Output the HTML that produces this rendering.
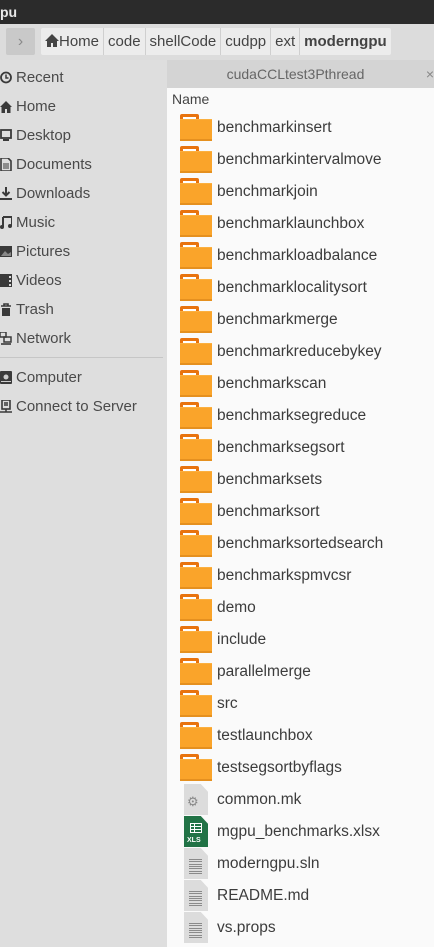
<!DOCTYPE html>
<html><head><meta charset="utf-8">
<style>
*{margin:0;padding:0;box-sizing:border-box}
body{width:434px;height:947px;overflow:hidden;background:#dedede;font-family:"Liberation Sans",sans-serif;position:relative}
#title{position:absolute;left:0;top:0;width:434px;height:24px;background:#2b2b2b;color:#e8e8e8;font-weight:bold;font-size:14px;line-height:24px;padding-left:0}
#tool{position:absolute;left:0;top:24px;width:434px;height:36px;background:#dcdcdc}
.navbtn{position:absolute;left:6px;top:4px;width:29px;height:27px;background:#c9c9c9;border-radius:2px;color:#8a8a8a;font-size:16px;text-align:center;line-height:27px}
.crumbs{position:absolute;left:41px;top:4px;height:27px;background:#ececec;border-radius:2px;display:flex;font-size:15px;color:#444;line-height:27px}
.crumbs span{padding:0 4px;border-right:1px solid #cfcfcf}
.crumbs span:last-child{border:none;font-weight:bold}
#side{position:absolute;left:0;top:60px;width:166px;height:887px;background:#dedede}
.si{position:absolute;left:16px;font-size:15px;color:#4a4a4a;line-height:18px}
.ic{position:absolute;left:0;width:12px;height:13px}
#sep{position:absolute;left:0;top:357px;width:163px;height:1px;background:#c6c6c6}
#main{position:absolute;left:167px;top:60px;width:267px;height:887px;background:#fafafa}
#tab{position:absolute;left:0;top:0;width:267px;height:28px;background:#d4d4d4;color:#666;font-size:14px;text-align:center;line-height:28px;padding-right:10px}
#tab b{position:absolute;right:0;top:0;font-weight:normal;color:#888}
#hdr{position:absolute;left:5px;top:31px;font-size:14px;color:#444}
.row{position:absolute;left:0;width:267px;height:32px}
.row .t{position:absolute;left:50px;top:8px;font-size:15.5px;color:#3c3c3c;white-space:nowrap}
.fold{position:absolute;left:13px;top:3px;width:32px;height:27px}
.fold .tb{position:absolute;left:0;top:0;width:19px;height:6px;background:#e8730e;border-radius:2px 2px 0 0}
.fold .wl{position:absolute;left:3px;top:3px;width:13px;height:2px;background:#fff}
.fold .bd{position:absolute;left:0;top:5px;width:32px;height:22px;background:#faa42a;border-top:1px solid #fbb040;border-bottom:2px solid #e5901f}
.doc{position:absolute;left:17px;top:1px;width:24px;height:31px;background:#dcdcdc;clip-path:polygon(0 0,70% 0,100% 25%,100% 100%,0 100%)}
.doc i{position:absolute;left:5px;width:13px;height:1px;background:#8a8a8a}
</style></head><body>
<div id="title">pu</div>
<div id="tool">
<div class="navbtn">›</div>
<div class="crumbs"><span><svg width="14" height="13" viewBox="0 0 14 13" style="vertical-align:-1px"><path d="M7 0L0 7h2v6h4V9h2v4h4V7h2z" fill="#444"/></svg>Home</span><span>code</span><span>shellCode</span><span>cudpp</span><span>ext</span><span>moderngpu</span></div>
</div>
<div id="side">
<svg class="ic" style="top:11px" viewBox="0 0 12 13"><circle cx="6" cy="6.5" r="5" fill="none" stroke="#3a3a3a" stroke-width="1.8"/><path d="M6 3.5v3.5h2.5" stroke="#3a3a3a" stroke-width="1.5" fill="none"/></svg><div class="si" style="top:9px">Recent</div>
<svg class="ic" style="top:40px" viewBox="0 0 12 13"><path d="M6 1L0 7h1.5v6h3.5V9h2v4h3.5V7H12z" fill="#3a3a3a"/></svg><div class="si" style="top:38px">Home</div>
<svg class="ic" style="top:69px" viewBox="0 0 12 13"><rect x="1" y="1" width="10" height="8" fill="none" stroke="#3a3a3a" stroke-width="1.8"/><rect x="3" y="10" width="6" height="2" fill="#3a3a3a"/></svg><div class="si" style="top:67px">Desktop</div>
<svg class="ic" style="top:98px" viewBox="0 0 12 13"><path d="M1 0h7l3 3v10H1z" fill="none" stroke="#3a3a3a" stroke-width="1.6"/><path d="M3 6h6M3 8h6M3 10h6" stroke="#3a3a3a"/></svg><div class="si" style="top:96px">Documents</div>
<svg class="ic" style="top:127px" viewBox="0 0 12 13"><path d="M6 0v8M2.5 5L6 8.5 9.5 5" stroke="#3a3a3a" stroke-width="2" fill="none"/><rect x="0" y="11" width="12" height="2" fill="#3a3a3a"/></svg><div class="si" style="top:125px">Downloads</div>
<svg class="ic" style="top:156px" viewBox="0 0 12 13"><path d="M3 1h9v9M3 1v10" stroke="#3a3a3a" stroke-width="2" fill="none"/><circle cx="2" cy="11" r="2" fill="#3a3a3a"/><circle cx="10" cy="10" r="2" fill="#3a3a3a"/></svg><div class="si" style="top:154px">Music</div>
<svg class="ic" style="top:185px" viewBox="0 0 12 13"><rect x="0" y="1" width="12" height="11" fill="#3a3a3a"/><path d="M1 11l4-5 3 3 3-2v4z" fill="#888"/></svg><div class="si" style="top:183px">Pictures</div>
<svg class="ic" style="top:214px" viewBox="0 0 12 13"><rect x="0" y="0" width="12" height="13" fill="#3a3a3a"/><rect x="9" y="2" width="2" height="2" fill="#ddd"/><rect x="9" y="6" width="2" height="2" fill="#ddd"/><rect x="9" y="10" width="2" height="2" fill="#ddd"/></svg><div class="si" style="top:212px">Videos</div>
<svg class="ic" style="top:243px" viewBox="0 0 12 13"><path d="M1 3h10M4 3V1h4v2" stroke="#3a3a3a" stroke-width="1.6" fill="none"/><rect x="2" y="5" width="8" height="8" fill="#3a3a3a"/></svg><div class="si" style="top:241px">Trash</div>
<svg class="ic" style="top:272px" viewBox="0 0 12 13"><rect x="0" y="0" width="6" height="5" fill="none" stroke="#3a3a3a" stroke-width="1.5"/><rect x="4" y="5" width="7" height="5" fill="none" stroke="#3a3a3a" stroke-width="1.5"/><path d="M1 12h10" stroke="#3a3a3a" stroke-width="1.6"/></svg><div class="si" style="top:270px">Network</div>
<div id="sep" style="top:297px"></div>
<svg class="ic" style="top:311px" viewBox="0 0 12 13"><rect x="0" y="0" width="12" height="13" rx="1" fill="#3a3a3a"/><circle cx="6" cy="6" r="2.5" fill="#ccc"/><rect x="1" y="10" width="10" height="1" fill="#ccc"/></svg><div class="si" style="top:309px">Computer</div>
<svg class="ic" style="top:340px" viewBox="0 0 12 13"><rect x="2" y="0" width="8" height="9" fill="none" stroke="#3a3a3a" stroke-width="1.6"/><path d="M4 3h4M4 5h4M0 12h12M6 9v3" stroke="#3a3a3a" stroke-width="1.5"/></svg><div class="si" style="top:338px">Connect to Server</div>
</div>
<div id="main">
<div id="tab">cudaCCLtest3Pthread<b>×</b></div>
<div id="hdr">Name</div>
<div id="rows"></div>
</div>
<script>
var f=["benchmarkinsert","benchmarkintervalmove","benchmarkjoin","benchmarklaunchbox","benchmarkloadbalance","benchmarklocalitysort","benchmarkmerge","benchmarkreducebykey","benchmarkscan","benchmarksegreduce","benchmarksegsort","benchmarksets","benchmarksort","benchmarksortedsearch","benchmarkspmvcsr","demo","include","parallelmerge","src","testlaunchbox","testsegsortbyflags"];
var files=["common.mk","mgpu_benchmarks.xlsx","moderngpu.sln","README.md","vs.props"];
var h="";
f.forEach(function(n,i){h+='<div class="row" style="top:'+(51+32*i)+'px"><div class="fold"><div class="tb"></div><div class="bd"></div><div class="wl"></div></div><div class="t">'+n+'</div></div>';});
files.forEach(function(n,j){var i=f.length+j;var ic;
if(j==1){ic='<div class="doc" style="background:#217346"><svg style="position:absolute;left:6px;top:7px" width="12" height="10" viewBox="0 0 12 10"><rect x="0.5" y="0.5" width="11" height="9" fill="none" stroke="#fff"/><path d="M0 3.5h12M0 6.5h12M4.5 0v10" stroke="#fff"/></svg><span style="position:absolute;left:3px;top:21px;font-size:7px;color:#fff;font-weight:bold">XLS</span></div>';}
else if(j==0){ic='<div class="doc"><span style="position:absolute;left:3px;top:10px;font-size:13px;color:#888">⚙</span></div>';}
else{var l='';for(var k=0;k<7;k++)l+='<i style="top:'+(11+k*2.3)+'px"></i>';ic='<div class="doc">'+l+'</div>';}
h+='<div class="row" style="top:'+(51+32*i)+'px">'+ic+'<div class="t">'+n+'</div></div>';});
document.getElementById("rows").innerHTML=h;
</script>
</body></html>
